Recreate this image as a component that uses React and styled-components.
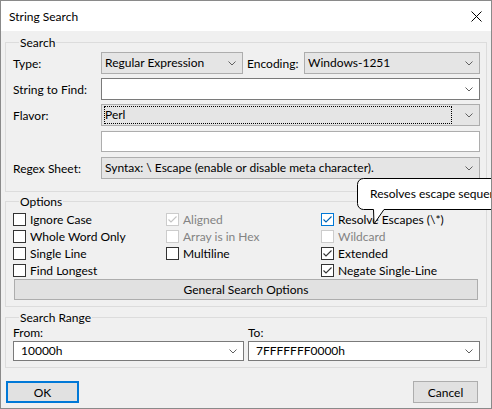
import React from 'react'
import styled, { createGlobalStyle } from 'styled-components'

const GlobalStyle = createGlobalStyle`
  html, body {
    margin: 0;
    padding: 0;
    overflow: hidden;
    background: #ffffff;
  }
  body {
    font-family: Lato, "Noto Sans", "Liberation Sans", sans-serif;
    font-size: 12px;
    color: #000;
  }
`

const Window = styled.div`
  position: relative;
  width: 492px;
  height: 409px;
  box-sizing: border-box;
  border: 1px solid #8a8a8a;
  background: #f0f0f0;
  overflow: hidden;
`

const TitleBar = styled.div`
  height: 30px;
  background: #ffffff;
  display: flex;
  align-items: center;
  justify-content: space-between;
  padding: 0 9px 0 8px;
`

const Title = styled.span`
  font-size: 12px;
  line-height: 15px;
  margin-top: 1px;
`

const CloseIcon = styled.svg`
  width: 11px;
  height: 11px;
  margin-top: 0;
`

const Client = styled.div`
  padding: 4px 4px 0 4px;
`

const Group = styled.fieldset`
  margin: ${p => p.$mt || 0}px 0 0 0;
  padding: ${p => p.$pt || 0}px 6px ${p => p.$pb || 0}px 7px;
  border: 1px solid #dcdcdc;
  min-width: 0;
`

const Legend = styled.legend`
  padding: 0 1px;
  margin-left: 6px;
  line-height: 15px;
  font-size: 12px;
`

const Row = styled.div`
  display: flex;
  align-items: center;
  height: ${p => p.$h || 22}px;
  margin-top: ${p => p.$mt || 0}px;
`

const FieldLabel = styled.span`
  width: ${p => p.$w ? `${p.$w}px` : 'auto'};
  flex: ${p => p.$grow ? 1 : 'none'};
  margin-left: ${p => p.$ml || 0}px;
  white-space: nowrap;
`

const ComboBox = styled.div`
  display: flex;
  align-items: center;
  box-sizing: border-box;
  height: ${p => p.$h || 22}px;
  width: ${p => p.$w ? `${p.$w}px` : 'auto'};
  flex: ${p => p.$w ? 'none' : 1};
  border: 1px solid ${p => p.$editable ? '#7a7a7a' : '#adadad'};
  background: ${p => p.$editable ? '#ffffff' : '#e5e5e5'};
  padding: 0 6px 0 2px;
`

const ComboValue = styled.span`
  flex: 1;
  box-sizing: border-box;
  height: 18px;
  line-height: 16px;
  padding-left: ${p => p.$editable ? 4 : 0}px;
  margin-right: 13px;
  border: 1px dotted ${p => p.$focus ? '#000' : 'transparent'};
  white-space: nowrap;
  overflow: hidden;
`

const ChevronSvg = styled.svg`
  width: 8px;
  height: 5px;
  flex: none;
`

const Chevron = () => (
  <ChevronSvg viewBox="0 0 8 5">
    <polyline points="0.5,0.5 4,4 7.5,0.5" fill="none" stroke="#606060" strokeWidth="1" />
  </ChevronSvg>
)

const Combo = ({ value, editable, focus, width, arrow = true, height }) => (
  <ComboBox $editable={editable} $w={width} $h={height}>
    <ComboValue $focus={focus} $editable={editable}>{value}</ComboValue>
    {arrow && <Chevron />}
  </ComboBox>
)

const TextBox = styled.div`
  flex: 1;
  box-sizing: border-box;
  height: 21px;
  border: 1px solid #adadad;
  background: #ffffff;
`

const OptionsGrid = styled.div`
  display: grid;
  grid-template-columns: 153px 155px 1fr;
  grid-auto-rows: 17px;
`

const CheckRow = styled.label`
  display: flex;
  align-items: center;
  gap: 4px;
  white-space: nowrap;
  color: ${p => p.$disabled ? '#838383' : '#000'};
`

const CheckBox = styled.span`
  width: 13px;
  height: 13px;
  box-sizing: border-box;
  border: 1px solid ${p => p.$focus ? '#0078d7' : p.$disabled ? '#cccccc' : '#333333'};
  background: #ffffff;
  display: flex;
  align-items: center;
  justify-content: center;
  flex: none;
`

const CheckMark = styled.svg`
  width: 11px;
  height: 11px;
`

const Check = ({ label, checked, disabled, focus }) => (
  <CheckRow $disabled={disabled}>
    <CheckBox $disabled={disabled} $focus={focus}>
      {checked && (
        <CheckMark viewBox="0 0 11 11">
          <polyline
            points="1.5,5.5 4,8 9.5,2.5"
            fill="none"
            stroke={focus ? '#0063b1' : disabled ? '#c4c4c4' : '#333333'}
            strokeWidth="1.1"
          />
        </CheckMark>
      )}
    </CheckBox>
    <span>{label}</span>
  </CheckRow>
)

const WideButton = styled.button`
  display: block;
  box-sizing: border-box;
  width: calc(100% - 3px);
  margin: 0 2px 0 1px;
  height: 21px;
  padding: 0;
  border: 1px solid #adadad;
  background: #e1e1e1;
  font: inherit;
  color: #000;
`

const RangeGrid = styled.div`
  display: grid;
  grid-template-columns: 231px 1fr;
  column-gap: 4px;
`

const RangeCol = styled.div`
  display: flex;
  flex-direction: column;
`

const RangeLabel = styled.span`
  height: 16px;
  line-height: 15px;
`

const ButtonBar = styled.div`
  display: flex;
  justify-content: space-between;
  margin-top: 13px;
  padding: 0 9px 0 1px;
`

const DialogButton = styled.button`
  box-sizing: border-box;
  width: ${p => p.$w}px;
  height: 22px;
  padding: 0;
  border: ${p => p.$default ? '2px solid #0078d7' : '1px solid #adadad'};
  background: #e1e1e1;
  font: inherit;
  color: #000;
`

const Tooltip = styled.div`
  position: absolute;
  left: 355px;
  top: 176px;
  width: 200px;
  height: 50px;
`

const TooltipShape = styled.svg`
  position: absolute;
  left: 0;
  top: 0;
  width: 200px;
  height: 50px;
`

const TooltipText = styled.span`
  position: absolute;
  left: 14px;
  top: 9px;
  white-space: nowrap;
  line-height: 15px;
`

export default function App() {
  return (
    <>
      <GlobalStyle />
      <Window>
        <TitleBar>
          <Title>String Search</Title>
          <CloseIcon viewBox="0 0 11 11">
            <path d="M0.5 0.5 L10.5 10.5 M10.5 0.5 L0.5 10.5" stroke="#000" strokeWidth="1" fill="none" />
          </CloseIcon>
        </TitleBar>
        <Client>
          <Group $mt={0} $pt={2} $pb={12}>
            <Legend>Search</Legend>
            <Row>
              <FieldLabel $w={88}>Type:</FieldLabel>
              <Combo value="Regular Expression" width={142} />
              <FieldLabel $grow $ml={4}>Encoding:</FieldLabel>
              <Combo value="Windows-1251" width={176} />
            </Row>
            <Row $mt={4}>
              <FieldLabel $w={88}>String to Find:</FieldLabel>
              <Combo value="" editable />
            </Row>
            <Row $mt={4}>
              <FieldLabel $w={88}>Flavor:</FieldLabel>
              <Combo value="Perl" focus />
            </Row>
            <Row $mt={5} $h={21}>
              <FieldLabel $w={88} />
              <TextBox />
            </Row>
            <Row $mt={5}>
              <FieldLabel $w={88}>Regex Sheet:</FieldLabel>
              <Combo value="Syntax: \ Escape (enable or disable meta character)." />
            </Row>
          </Group>

          <Group $mt={2} $pt={2} $pb={6}>
            <Legend>Options</Legend>
            <OptionsGrid>
              <Check label="Ignore Case" />
              <Check label="Aligned" checked disabled />
              <Check label="Resolve Escapes (\*)" checked focus />
              <Check label="Whole Word Only" />
              <Check label="Array is in Hex" disabled />
              <Check label="Wildcard" disabled />
              <Check label="Single Line" />
              <Check label="Multiline" />
              <Check label="Extended" checked />
              <Check label="Find Longest" />
              <span />
              <Check label="Negate Single-Line" checked />
            </OptionsGrid>
            <WideButton>General Search Options</WideButton>
          </Group>

          <Group $mt={3} $pt={0} $pb={6}>
            <Legend>Search Range</Legend>
            <RangeGrid>
              <RangeCol>
                <RangeLabel>From:</RangeLabel>
                <Combo value="10000h" editable />
              </RangeCol>
              <RangeCol>
                <RangeLabel>To:</RangeLabel>
                <Combo value="7FFFFFFF0000h" editable />
              </RangeCol>
            </RangeGrid>
          </Group>

          <ButtonBar>
            <DialogButton $default $w={73}>OK</DialogButton>
            <DialogButton $w={65}>Cancel</DialogButton>
          </ButtonBar>
        </Client>

        <Tooltip>
          <TooltipShape viewBox="0 0 200 50">
            <path
              d="M7.5,1.5 H199 V32.5 H28 L18,47 L17.5,32.5 H7.5 A6,6 0 0 1 1.5,26.5 V7.5 A6,6 0 0 1 7.5,1.5 Z"
              fill="#ffffff"
              stroke="#000000"
              strokeWidth="1"
            />
          </TooltipShape>
          <TooltipText>Resolves escape sequences such as \n and \t</TooltipText>
        </Tooltip>
      </Window>
    </>
  )
}
